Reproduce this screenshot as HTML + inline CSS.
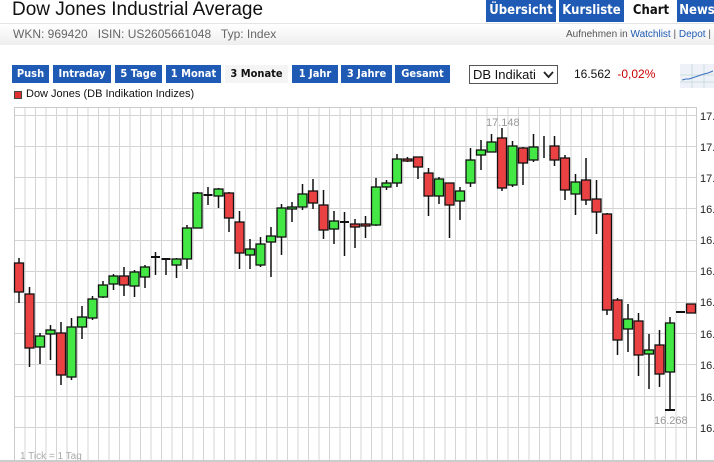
<!DOCTYPE html>
<html><head><meta charset="utf-8"><style>
*{margin:0;padding:0;box-sizing:border-box}
body{width:714px;height:462px;overflow:hidden;background:#fff;font-family:"Liberation Sans",sans-serif;position:relative}
.a{position:absolute;white-space:nowrap}
.tab{position:absolute;top:0;height:22px;background:#1f5bb4;color:#fff;font:bold 13px "DejaVu Sans Condensed","Liberation Sans",sans-serif;line-height:22px;text-align:center}
.btn{position:absolute;top:65px;height:18px;background:#1f5bb4;color:#fff;font:bold 11px "DejaVu Sans Condensed","Liberation Sans",sans-serif;line-height:18px;text-align:center}
</style></head><body>
<div class="a" style="left:12px;top:-1px;font-size:19px;color:#111">Dow Jones Industrial Average</div>
<div class="tab" style="left:486px;width:70px">Übersicht</div>
<div class="tab" style="left:559px;width:65px">Kursliste</div>
<div class="tab" style="left:627px;width:48px;background:#fff;color:#111">Chart</div>
<div class="tab" style="left:677px;width:40px">News</div>
<div class="a" style="left:0;top:23px;width:714px;height:22px;background:linear-gradient(#fff,#eee);border-top:1px solid #e4e4e4"></div>
<div class="a" style="left:13px;top:27px;font-size:12px;color:#666">WKN: 969420&nbsp;&nbsp; ISIN: US2605661048&nbsp;&nbsp; Typ: Index</div>
<div class="a" style="left:566px;top:29px;font-size:10px;color:#555">Aufnehmen in <span style="color:#1f5bb4">Watchlist</span> | <span style="color:#1f5bb4">Depot</span> |</div>
<div class="btn" style="left:12px;width:37px">Push</div>
<div class="btn" style="left:53px;width:58px">Intraday</div>
<div class="btn" style="left:115px;width:47px">5 Tage</div>
<div class="btn" style="left:166px;width:55px">1 Monat</div>
<div class="btn" style="left:225px;width:63px;background:#f4f4f4;color:#111">3 Monate</div>
<div class="btn" style="left:292px;width:46px">1 Jahr</div>
<div class="btn" style="left:341px;width:51px">3 Jahre</div>
<div class="btn" style="left:395px;width:55px">Gesamt</div>
<div class="a" style="left:469px;top:65px;width:89px;height:19px;border:1px solid #555;font-size:13px;line-height:17px;padding-left:3px;color:#111">DB Indikati</div>
<svg class="a" style="left:543px;top:70px" width="11" height="9"><path d="M1 2L5.5 7 10 2" stroke="#222" stroke-width="1.8" fill="none"/></svg>
<div class="a" style="left:574px;top:67px;font-size:12px;color:#111">16.562 <span style="color:#c00">&nbsp;-0,02%</span></div>
<svg class="a" style="left:680px;top:64px" width="34" height="24"><rect x="0" y="0" width="34" height="24" fill="#eef2f8"/><path d="M0 11H34M0 18H34M12 0V24M24 0V24" stroke="#cdd" stroke-width="1"/><path d="M2 16L6 15 9 15 12 14 15 13 18 12 21 11 24 10 28 9 33 7" stroke="#3a6fc0" fill="none"/></svg>
<div class="a" style="left:14px;top:91px;width:8px;height:8px;background:#e03030;border:1px solid #444"></div>
<div class="a" style="left:26px;top:88px;font-size:11px;color:#111">Dow Jones (DB Indikation Indizes)</div>
<svg class="a" style="left:0;top:0" width="714" height="462">
<g stroke="#d4d4d4" stroke-width="1">
<path d="M14.5 107V462M25 107V462M35.5 107V462M46 107V462M56.5 107V462M67 107V462M77.5 107V462M88 107V462M98.5 107V462M109 107V462M119.5 107V462M130 107V462M140.5 107V462M151 107V462M161.5 107V462M172 107V462M182.5 107V462M193 107V462M203.5 107V462M214 107V462M224.5 107V462M235 107V462M245.5 107V462M256 107V462M266.5 107V462M277 107V462M287.5 107V462M298 107V462M308.5 107V462M319 107V462M329.5 107V462M340 107V462M350.5 107V462M361 107V462M371.5 107V462M382 107V462M392.5 107V462M403 107V462M413.5 107V462M424 107V462M434.5 107V462M445 107V462M455.5 107V462M466 107V462M476.5 107V462M487 107V462M497.5 107V462M508 107V462M518.5 107V462M529 107V462M539.5 107V462M550 107V462M560.5 107V462M571 107V462M581.5 107V462M592 107V462M602.5 107V462M613 107V462M623.5 107V462M634 107V462M644.5 107V462M655 107V462M665.5 107V462M676 107V462M686.5 107V462"/>
<path d="M14 115.5H696M14 146.5H696M14 177.5H696M14 208.5H696M14 240.5H696M14 271.5H696M14 302.5H696M14 333.5H696M14 364.5H696M14 396.5H696M14 427.5H696"/>
<rect x="14.5" y="107.5" width="682" height="360" fill="none" stroke="#ccc"/>
</g>
<g font-size="11" fill="#222" font-family="Liberation Sans,sans-serif">
<text x="700" y="120">17.</text><text x="700" y="151">17.</text><text x="700" y="182">17.</text><text x="700" y="213">16.</text><text x="700" y="244">16.</text><text x="700" y="275">16.</text><text x="700" y="306">16.</text><text x="700" y="338">16.</text><text x="700" y="369">16.</text><text x="700" y="401">16.</text><text x="700" y="432">16.</text>
</g>
<text x="486" y="126" font-size="11" fill="#999" font-family="Liberation Sans,sans-serif">17.148</text>
<text x="654" y="424" font-size="11" fill="#999" font-family="Liberation Sans,sans-serif">16.268</text>
<text x="20" y="459" font-size="10" fill="#aaa" font-family="Liberation Sans,sans-serif">1 Tick = 1 Tag</text>
<g stroke="#111" stroke-width="1.5">
<path d="M19 258V303M29.5 287V367M40 333V364M50.5 325V360M61 322V385M71.5 318V380M82 306V339M92.5 296V320M103 281V298M113.5 274V290M124 267V296M134.5 270V297M145 265V288M155.5 252V275M166 259V275M176.5 258V278M187 225V269M197.5 192V228M208 187V205M218.5 188V208M229 192V232M239.5 211V269M250 239V269M260.5 237V267M271 227V277M281.5 204V255M292 202V222M302.5 184V210M313 179V209M323.5 190V239M334 211V244M344.5 212V256M355 219V248M365.5 216V238M376 178V226M386.5 180V190M397 154V187M407.5 157V162M418 157V179M428.5 168V216M439 177V204M449.5 183V238M460 187V220M470.5 148V187M481 140V170M491.5 134V152M502 128V191M512.5 141V187M523 147V185M533.5 134V162M544 136V158M554.5 136V166M565 155V200M575.5 174V215M586 158V205M596.5 180V234M607 213V315M617.5 298V355M628 304V352M638.5 313V376M649 334V389M659.5 330V387M670 317V410"/>
<path d="M151 257H160M161.5 259H170.5M203.5 195H212.5M340 222H349M676 312H685M665 410H675" stroke-width="2"/>
</g>
<g stroke="#111" stroke-width="1.3" fill="#ea4242">
<rect x="14.5" y="263" width="9" height="29"/><rect x="25" y="294" width="9" height="54"/><rect x="56.5" y="333" width="9" height="42"/><rect x="119.5" y="276" width="9" height="9"/><rect x="224.5" y="193" width="9" height="25"/><rect x="235" y="222" width="9" height="31"/><rect x="308.5" y="191" width="9" height="12"/><rect x="319" y="205" width="9" height="25"/><rect x="350.5" y="224" width="9" height="3"/><rect x="361" y="224" width="9" height="2"/><rect x="403" y="159" width="9" height="2"/><rect x="413.5" y="157" width="9" height="10"/><rect x="424" y="173" width="9" height="23"/><rect x="445" y="183" width="9" height="22"/><rect x="497.5" y="138" width="9" height="50"/><rect x="518.5" y="148" width="9" height="15"/><rect x="550" y="146" width="9" height="14"/><rect x="560.5" y="158" width="9" height="32"/><rect x="581.5" y="180" width="9" height="20"/><rect x="592" y="199" width="9" height="13"/><rect x="602.5" y="214" width="9" height="96"/><rect x="613" y="300" width="9" height="40"/><rect x="634" y="321" width="9" height="34"/><rect x="655" y="345" width="9" height="29"/><rect x="686.5" y="304" width="9" height="9"/>
</g>
<g stroke="#111" stroke-width="1.3" fill="#44e844">
<rect x="35.5" y="336" width="9" height="11"/><rect x="46" y="330" width="9" height="4"/><rect x="67" y="327" width="9" height="50"/><rect x="77.5" y="317" width="9" height="10"/><rect x="88" y="299" width="9" height="19"/><rect x="98.5" y="285" width="9" height="12"/><rect x="109" y="276" width="9" height="8"/><rect x="130" y="272" width="9" height="14"/><rect x="140.5" y="267" width="9" height="10"/><rect x="172" y="259" width="9" height="6"/><rect x="182.5" y="228" width="9" height="31"/><rect x="193" y="193" width="9" height="35"/><rect x="214" y="189" width="9" height="7"/><rect x="245.5" y="249" width="9" height="6"/><rect x="256" y="244" width="9" height="21"/><rect x="266.5" y="236" width="9" height="6"/><rect x="277" y="208" width="9" height="29"/><rect x="287.5" y="207" width="9" height="2"/><rect x="298" y="194" width="9" height="13"/><rect x="329.5" y="221" width="9" height="8"/><rect x="371.5" y="187" width="9" height="38"/><rect x="382" y="183" width="9" height="4"/><rect x="392.5" y="159" width="9" height="24"/><rect x="434.5" y="179" width="9" height="17"/><rect x="455.5" y="191" width="9" height="10"/><rect x="466" y="160" width="9" height="23"/><rect x="476.5" y="150" width="9" height="5"/><rect x="487" y="142" width="9" height="10"/><rect x="508" y="146" width="9" height="39"/><rect x="529" y="147" width="9" height="13"/><rect x="571" y="182" width="9" height="12"/><rect x="623.5" y="319" width="9" height="10"/><rect x="644.5" y="350" width="9" height="4"/><rect x="665.5" y="323" width="9" height="49"/>
</g>
<rect x="0" y="460" width="714" height="2" fill="#ccc"/>
</svg>
</body></html>
